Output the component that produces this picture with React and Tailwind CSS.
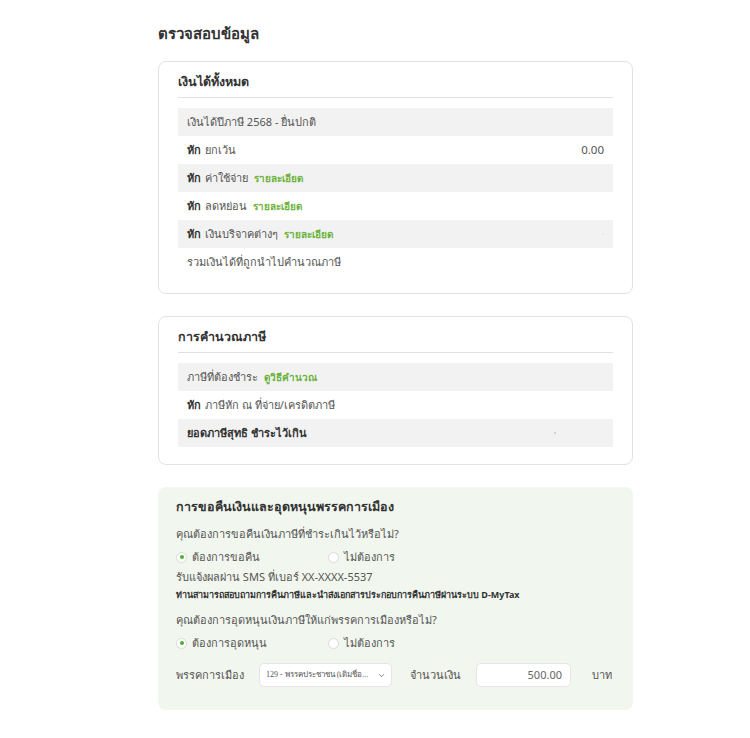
import React from "react";

const Row = ({ gray, children, right }) => (
  <div
    className={`flex items-center justify-between h-[28px] px-[9px] ${
      gray ? "bg-[#f2f2f2]" : ""
    }`}
  >
    <div className="flex items-center">{children}</div>
    {right}
  </div>
);

const Hak = () => <span className="font-bold text-[#333] mr-[4px]">หัก</span>;
const Link = ({ children }) => (
  <span className="text-[#6cb33e] font-bold text-[10px] ml-[6px]">{children}</span>
);

const Radio = ({ checked, label }) => (
  <label className="flex items-center gap-[5px]">
    <span className="w-[11px] h-[11px] rounded-full border border-[#d9d9d9] bg-white flex items-center justify-center">
      {checked && <span className="w-[4px] h-[4px] rounded-full bg-[#4caf30]" />}
    </span>
    <span>{label}</span>
  </label>
);

const App = () => {
  return (
    <div
      className="w-[750px] h-[738px] bg-white text-[11px] text-[#555]"
      style={{ fontFamily: '"Noto Sans", "Liberation Sans", sans-serif' }}
    >
      <div className="ml-[158px] w-[475px] pt-[22px]">
        {/* Title */}
        <h1 className="text-[15px] font-bold text-[#333] leading-[22px]">
          ตรวจสอบข้อมูล
        </h1>

        {/* Income card */}
        <div className="mt-[17px] border border-[#e2e2e2] rounded-[8px] px-[19px] pt-[10px] pb-[17px]">
          <h2 className="text-[12.5px] font-bold text-[#333] leading-[20px]">
            เงินได้ทั้งหมด
          </h2>
          <div className="mt-[5px] border-t border-[#e0e0e0] mb-[10px]" />
          <Row gray>เงินได้ปีภาษี 2568 - ยื่นปกติ</Row>
          <Row right={<span className="text-[11.5px]">0.00</span>}>
            <Hak />ยกเว้น
          </Row>
          <Row gray>
            <Hak />ค่าใช้จ่าย<Link>รายละเอียด</Link>
          </Row>
          <Row>
            <Hak />ลดหย่อน<Link>รายละเอียด</Link>
          </Row>
          <Row gray right={<span className="w-[2px] h-[2px] bg-[#e6e6e6] rounded-full" />}>
            <Hak />เงินบริจาคต่างๆ<Link>รายละเอียด</Link>
          </Row>
          <Row>รวมเงินได้ที่ถูกนำไปคำนวณภาษี</Row>
        </div>

        {/* Tax calculation card */}
        <div className="mt-[22px] border border-[#e2e2e2] rounded-[8px] px-[19px] pt-[10px] pb-[17px]">
          <h2 className="text-[12.5px] font-bold text-[#333] leading-[20px]">
            การคำนวณภาษี
          </h2>
          <div className="mt-[5px] border-t border-[#e0e0e0] mb-[10px]" />
          <Row gray>
            ภาษีที่ต้องชำระ<Link>ดูวิธีคำนวณ</Link>
          </Row>
          <Row>
            <Hak />ภาษีหัก ณ ที่จ่าย/เครดิตภาษี
          </Row>
          <Row
            gray
            right={<span className="mr-[48px] w-[2px] h-[2px] bg-[#c8c8c8] rounded-full" />}
          >
            <span className="font-bold text-[#333]">ยอดภาษีสุทธิ ชำระไว้เกิน</span>
          </Row>
        </div>

        {/* Refund / party card */}
        <div className="mt-[22px] bg-[#f1f6ee] rounded-[8px] px-[18px] pt-[10px] pb-[23px]">
          <h2 className="text-[12.5px] font-bold text-[#333] leading-[20px]">
            การขอคืนเงินและอุดหนุนพรรคการเมือง
          </h2>
          <p className="mt-[8px] leading-[18px]">คุณต้องการขอคืนเงินภาษีที่ชำระเกินไว้หรือไม่?</p>
          <div className="flex mt-[5px] leading-[18px]">
            <div className="w-[152px]">
              <Radio checked label="ต้องการขอคืน" />
            </div>
            <Radio label="ไม่ต้องการ" />
          </div>
          <p className="mt-[2px] leading-[18px]">รับแจ้งผลผ่าน SMS ที่เบอร์ XX-XXXX-5537</p>
          <p className="text-[9px] font-bold text-[#333] leading-[18px]">
            ท่านสามารถสอบถามการคืนภาษีและนำส่งเอกสารประกอบการคืนภาษีผ่านระบบ D-MyTax
          </p>
          <p className="mt-[7px] leading-[18px]">
            คุณต้องการอุดหนุนเงินภาษีให้แก่พรรคการเมืองหรือไม่?
          </p>
          <div className="flex mt-[5px] leading-[18px]">
            <div className="w-[152px]">
              <Radio checked label="ต้องการอุดหนุน" />
            </div>
            <Radio label="ไม่ต้องการ" />
          </div>
          <div className="flex items-center mt-[11px]">
            <span className="w-[83px]">พรรคการเมือง</span>
            <div className="flex items-center justify-between w-[133px] h-[24px] bg-white border border-[#e5e5e5] rounded-[5px] pl-[6px] pr-[5px]">
              <span
                className="text-[8px] text-[#555] whitespace-nowrap"
                style={{ fontFamily: '"Liberation Serif", serif' }}
              >
                129 - พรรคประชาชน (เดิมชื่อ...
              </span>
              <svg width="9" height="9" viewBox="0 0 24 24" fill="none" stroke="#777" strokeWidth="2.5">
                <path d="M6 9l6 6 6-6" />
              </svg>
            </div>
            <span className="ml-[18px] w-[66px]">จำนวนเงิน</span>
            <div className="w-[95px] h-[24px] bg-white border border-[#e5e5e5] rounded-[5px] flex items-center justify-end px-[8px] text-[#666]">
              500.00
            </div>
            <span className="ml-[21px]">บาท</span>
          </div>
        </div>
      </div>
    </div>
  );
};

export default App;
